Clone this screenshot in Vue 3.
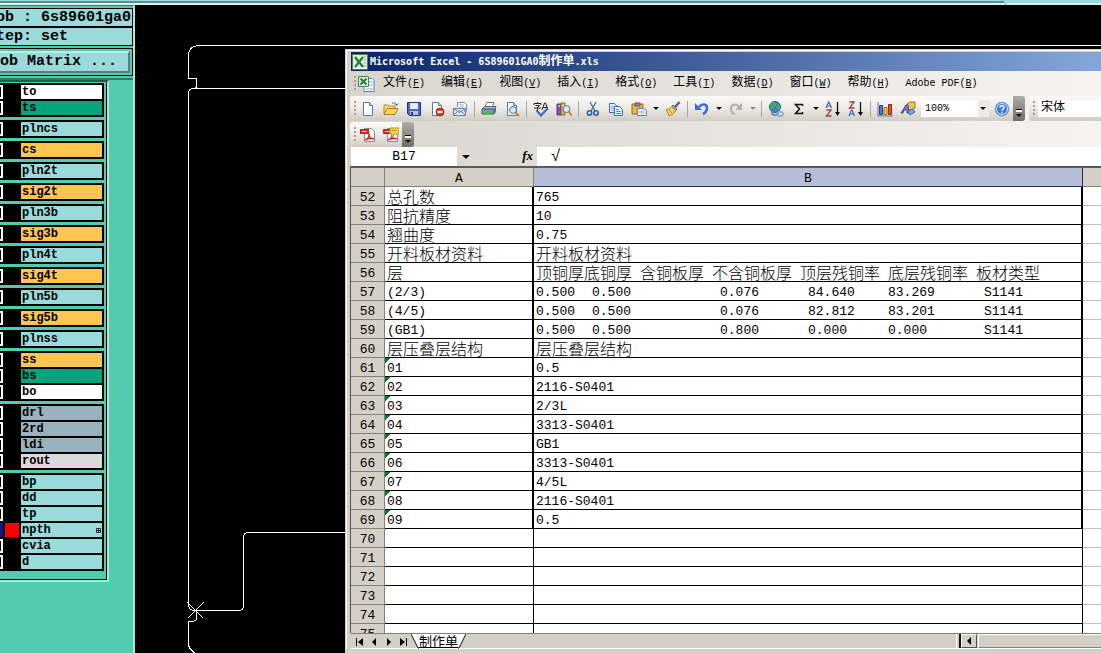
<script setup>
const layerGroups = [
  [{ name: 'to', tone: 'white' }, { name: 'ts', tone: 'green' }],
  [{ name: 'plncs', tone: 'cyan' }],
  [{ name: 'cs', tone: 'amber' }],
  [{ name: 'pln2t', tone: 'cyan' }],
  [{ name: 'sig2t', tone: 'amber' }],
  [{ name: 'pln3b', tone: 'cyan' }],
  [{ name: 'sig3b', tone: 'amber' }],
  [{ name: 'pln4t', tone: 'cyan' }],
  [{ name: 'sig4t', tone: 'amber' }],
  [{ name: 'pln5b', tone: 'cyan' }],
  [{ name: 'sig5b', tone: 'amber' }],
  [{ name: 'plnss', tone: 'cyan' }],
  [{ name: 'ss', tone: 'amber' }, { name: 'bs', tone: 'green' }, { name: 'bo', tone: 'white' }],
  [{ name: 'drl', tone: 'slate' }, { name: '2rd', tone: 'slate' }, { name: 'ldi', tone: 'slate' }, { name: 'rout', tone: 'silver' }],
  [{ name: 'bp', tone: 'cyan' }, { name: 'dd', tone: 'cyan' }, { name: 'tp', tone: 'cyan' }, { name: 'npth', tone: 'cyan', active: true }, { name: 'cvia', tone: 'cyan' }, { name: 'd', tone: 'cyan' }],
]

const menus = [
  ['文件', 'F'], ['编辑', 'E'], ['视图', 'V'], ['插入', 'I'], ['格式', 'O'],
  ['工具', 'T'], ['数据', 'D'], ['窗口', 'W'], ['帮助', 'H'], ['Adobe PDF', 'B'],
]

const page = '<path d="M3.500 1.500h6l3 3v10h-9z" fill="#fff" stroke="#5a78b4"/><path d="M9.500 1.500v3h3" fill="#c9d8f2" stroke="#5a78b4"/>'
const pdf = '<path d="M4.500 1.500h7l3 3v10h-10z" fill="#fff" stroke="#8a8a8a"/><path d="M0 2h9v5H0z" fill="#d81e1e"/><path d="M2 4.500h5" stroke="#fff"/><path d="M5 13c3-1 4-4 4-6 0 3 2 5 5 5-3-1-6-.5-9 1z" fill="none" stroke="#d81e1e" stroke-width="1.300"/>'
const icons = {
  new: page,
  open: '<path d="M1 13V4h4l1 1h6v3" fill="#f7d777" stroke="#b8892a"/><path d="M1 13.500l3-6h11l-3 6z" fill="#fbd45e" stroke="#b07c1c"/><path d="M9 2.500c2-1.500 4-.5 4.500 1.500M15 2.500l-1.300 2-2-1.200" fill="none" stroke="#4a6fae"/>',
  save: '<path d="M1.500 1.500h13v13h-11l-2-2z" fill="#4d66cf" stroke="#26358c"/><path d="M4 2h8v6H4z" fill="#e6ecfa"/><path d="M4 10h8v4H4z" fill="#b8c4e6"/><path d="M5 11h2v3H5z" fill="#26358c"/>',
  permission: page + '<circle cx="11" cy="11" r="4" fill="#d9401f" stroke="#a62a10"/><path d="M8.500 11h5" stroke="#fff" stroke-width="2"/>',
  mail: '<path d="M5.500 6V1.500h7l2 2V10" fill="#fff" stroke="#6c86b8"/><path d="M7 4h5M7 6h5" stroke="#9cb0d6"/><path d="M1.500 7.500h12v7h-12z" fill="#e4e8f2" stroke="#6f7f9c"/><path d="M1.500 14l5-4h2l5 4M1.500 7.500l6 4 6-4" fill="none" stroke="#6f7f9c"/><path d="M12 8h3v3h-3z" fill="#7a9ad8"/>',
  print: '<path d="M4 6l2-4.500h7L11.500 6" fill="#fff" stroke="#5b7396"/><path d="M1 8l3-2.500h11L13 8z" fill="#bcc8d8" stroke="#4c5f7c"/><path d="M1 8h12v5H1z" fill="#8495ae" stroke="#4c5f7c"/><path d="M13 8l2-2.500V11l-2 2z" fill="#5e708c"/><path d="M3 11h8v3H3z" fill="#54b454"/>',
  preview: page + '<circle cx="9" cy="9" r="3.500" fill="#cfe4f8" fill-opacity=".9" stroke="#5d6c82"/><path d="M11.500 11.500l3.500 3.500" stroke="#b8862c" stroke-width="2"/>',
  spell: '<path d="M1 2.500h7M4.500 1v1.500M1 2.500V4M8 2.500V4M2.500 4.500h4L4.500 6.500V10H3M1 7h7" fill="none" stroke="#222"/><path d="M9 9l2.500-7h1L15 9M10 6.500h4" fill="none" stroke="#222"/><path d="M4 10l4 4.500L14 8" fill="none" stroke="#3a6fd0" stroke-width="2.200"/>',
  research: '<path d="M1 3h4v11H1z" fill="#7a5bb0" stroke="#4b3880"/><path d="M5 2h4v12H5z" fill="#d4b05a" stroke="#8a6a20"/><path d="M2 5h2M6 5h2" stroke="#fff"/><circle cx="10.500" cy="8" r="3.500" fill="#d7e8f8" stroke="#5d6c82"/><path d="M13 10.500l2.500 4" stroke="#b8862c" stroke-width="2"/>',
  cut: '<path d="M5 1l5 9M11 1L6 10" stroke="#5d7596" stroke-width="1.500"/><circle cx="4.500" cy="12" r="2.200" fill="none" stroke="#2f5dbb" stroke-width="1.600"/><circle cx="11" cy="12" r="2.200" fill="none" stroke="#2f5dbb" stroke-width="1.600"/>',
  copy: '<path d="M1.500 2.500h5l3 3v6h-8z" fill="#eaf2ff" stroke="#3f6bbd"/><path d="M3 5h3M3 7h4M3 9h4" stroke="#7ba0e0"/><path d="M6.500 5.500h5l3 3v6h-8z" fill="#eaf2ff" stroke="#3f6bbd"/><path d="M8 8.500h3M8 10.500h5M8 12.500h5" stroke="#5b88d8"/>',
  paste: '<path d="M1 3h11v10H1z" fill="#e9b53c" stroke="#9a6d17"/><path d="M4 2h5v3H4z" fill="#8c8f96" stroke="#585b62"/><path d="M6.500 7.500h6l3 2v5h-9z" fill="#fff" stroke="#6078a8"/><path d="M8 10h5M8 12h6" stroke="#8aa2cc"/>',
  brush: '<path d="M14.500 1L10 6" stroke="#5f549e" stroke-width="2.500"/><path d="M8 4l4 4-1.500 1.500-4-4z" fill="#9ba3b2" stroke="#646b7a"/><path d="M6.500 5.500l4 4C9 13 6 14.500 4 14.500 3 12 2 10.500 1 8.500c2 0 4-1 5.500-3z" fill="#f3d25b" stroke="#a8852a"/><path d="M4 9l3 3" stroke="#a8852a"/>',
  undo: '<path d="M5 6c3-4 8-3 8 1 0 3-2 5-4 6" fill="none" stroke="#3d6fcd" stroke-width="2.600"/><path d="M1 2v7h7z" fill="#3d6fcd"/>',
  redo: '<path d="M11 6C8 2 3 3 3 8c0 3 2 4.500 4 5" fill="none" stroke="#b0b0b0" stroke-width="2.200"/><path d="M14 2v7H7z" fill="#b0b0b0"/>',
  link: '<circle cx="7" cy="6" r="5.500" fill="#3d7dc8" stroke="#2a5a94"/><path d="M4 2c3-1 5 0 4 2S5 6 4 9C2 8 1.500 4 4 2zM9 4l3 0v4L9 9z" fill="#4cb050"/><rect x="4" y="10" width="6" height="4" rx="2" fill="none" stroke="#607aa8" stroke-width="1.500"/><rect x="9" y="11" width="6" height="4" rx="2" fill="none" stroke="#8ba2c8" stroke-width="1.500"/>',
  sum: '<path d="M11.500 5V3.500H4.500l4 4.500-4 4.500h7V11" fill="none" stroke="#111" stroke-width="1.500"/>',
  az: '<path d="M1 7l2.500-6h.5L6.500 7M2 5h4" fill="none" stroke="#3d61b8" stroke-width="1.200"/><path d="M1.500 9h4.500l-4.500 6h5" fill="none" stroke="#b03b32" stroke-width="1.300"/><path d="M12.500 1v12" stroke="#111" stroke-width="1.300"/><path d="M10 11h5l-2.500 4z" fill="#111"/>',
  za: '<path d="M1.500 1h4.500L1.500 7h5" fill="none" stroke="#b03b32" stroke-width="1.300"/><path d="M1 15l2.500-6h.5l2.500 6M2 13h4" fill="none" stroke="#3d61b8" stroke-width="1.200"/><path d="M12.500 1v12" stroke="#111" stroke-width="1.300"/><path d="M10 11h5l-2.500 4z" fill="#111"/>',
  chart: '<path d="M1 1v14h15" fill="none" stroke="#66758f"/><path d="M2.500 4.500h3v9h-3z" fill="#4f7ad4" stroke="#26448e"/><path d="M7 6.500h3v7H7z" fill="#f2c84b" stroke="#9a7820"/><path d="M11.500 3.500h3v10h-3z" fill="#dc5531" stroke="#8d2b14"/>',
  draw: '<path d="M7 3l3-2h5v6l-3 2H7z" fill="#e8c65c" stroke="#967626"/><path d="M1 12L6 4h2l1 8H7V9H4l-1 3z" fill="#7b79cf" stroke="#48478e"/><path d="M8 10l5-2 2 3-5 3z" fill="#7aa4dd" stroke="#4b6ea0"/>',
  help: '<circle cx="8" cy="8" r="6.800" fill="#3c78d8" stroke="#6c95d2"/><circle cx="8" cy="8" r="5.500" fill="none" stroke="#d8e8ff"/><path d="M6 6.500C6 4 10 4 10 6.500 10 8 8 8 8 9.500M8 10.800v1.400" fill="none" stroke="#fff" stroke-width="1.500"/>',
  pdf,
  pdfNote: pdf + '<path d="M7 1h9v6h-4l-3 3V7H7z" fill="#f8d548" stroke="#b8952a"/><path d="M9 3.500h5" stroke="#b8952a"/>',
}

const standardBar = [
  { icon: 'new', label: '新建' }, { icon: 'open', label: '打开' }, { icon: 'save', label: '保存' },
  { icon: 'permission', label: '权限' }, { icon: 'mail', label: '电子邮件' }, { sep: true },
  { icon: 'print', label: '打印' }, { icon: 'preview', label: '打印预览' }, { sep: true },
  { icon: 'spell', label: '拼写检查' }, { icon: 'research', label: '信息检索' }, { sep: true },
  { icon: 'cut', label: '剪切' }, { icon: 'copy', label: '复制' }, { icon: 'paste', label: '粘贴', more: true },
  { icon: 'brush', label: '格式刷' }, { sep: true },
  { icon: 'undo', label: '撤消', more: true }, { icon: 'redo', label: '恢复', more: true, dim: true }, { sep: true },
  { icon: 'link', label: '超链接' }, { icon: 'sum', label: '自动求和', more: true },
  { icon: 'az', label: '升序排序' }, { icon: 'za', label: '降序排序' }, { sep: true },
  { icon: 'chart', label: '图表向导' }, { icon: 'draw', label: '绘图' },
]

const rows = [
  { n: 52, a: '总孔数', b: '765' },
  { n: 53, a: '阻抗精度', b: '10' },
  { n: 54, a: '翘曲度', b: '0.75' },
  { n: 55, a: '开料板材资料', b: '开料板材资料' },
  { n: 56, a: '层', heads: ['顶铜厚', '底铜厚', '含铜板厚', '不含铜板厚', '顶层残铜率', '底层残铜率', '板材类型'] },
  { n: 57, a: '(2/3)', values: ['0.500', '0.500', '0.076', '84.640', '83.269', 'S1141'] },
  { n: 58, a: '(4/5)', values: ['0.500', '0.500', '0.076', '82.812', '83.201', 'S1141'] },
  { n: 59, a: '(GB1)', values: ['0.500', '0.500', '0.800', '0.000', '0.000', 'S1141'] },
  { n: 60, a: '层压叠层结构', b: '层压叠层结构' },
  { n: 61, a: '01', b: '0.5', flag: true },
  { n: 62, a: '02', b: '2116-S0401', flag: true },
  { n: 63, a: '03', b: '2/3L', flag: true },
  { n: 64, a: '04', b: '3313-S0401', flag: true },
  { n: 65, a: '05', b: 'GB1', flag: true },
  { n: 66, a: '06', b: '3313-S0401', flag: true },
  { n: 67, a: '07', b: '4/5L', flag: true },
  { n: 68, a: '08', b: '2116-S0401', flag: true },
  { n: 69, a: '09', b: '0.5', flag: true },
  { n: 70 }, { n: 71 }, { n: 72 }, { n: 73 }, { n: 74 }, { n: 75 },
]
const isHan = (t) => /[\u4e00-\u9fff]/.test(t || '')
const tabArrows = [
  ['首张工作表', 'M1 0h1v8H1zM8 0v8L3 4z'],
  ['上一张工作表', 'M6 0v8L2 4z'],
  ['下一张工作表', 'M2 0v8l4-4z'],
  ['末张工作表', 'M0 0v8l5-4zM6 0h1v8H6z'],
]
</script>

<template>
  <div class="desktop">
    <div class="top-strip"><span class="strip-left"></span><span class="strip-right"></span></div>
    <div class="work">
      <aside class="sidebar">
        <section class="job">
          <div class="job-row">Job : 6s89601ga0</div>
          <div class="job-row">Step: set</div>
          <div class="matrix-frame"><button class="matrix" type="button">Job Matrix ...</button></div>
        </section>
        <section class="layers">
          <div v-for="(group, gi) in layerGroups" :key="gi" class="group">
            <div v-for="layer in group" :key="layer.name" class="layer" :class="{ active: layer.active }">
              <input class="tick" type="checkbox" :aria-label="layer.name" :checked="layer.active" />
              <span class="swatch"></span>
              <button type="button" class="name" :class="layer.tone">
                {{ layer.name }}
                <svg v-if="layer.active" width="5" height="5" viewBox="0 0 5 5"><path d="M.5.5h4v4h-4zM2.500 0v5M0 2.500h5" fill="none" stroke="#111" stroke-width=".8" /></svg>
              </button>
            </div>
          </div>
        </section>
      </aside>

      <main class="canvas">
        <svg class="board" width="1400" height="900" viewBox="135 5 1400 900" fill="none" stroke="#fff" shape-rendering="crispEdges">
          <path d="M1535 45.500H200q-6 0-9 3t-2.500 9V78.500H196.500V86q0 2-2 2M346 88.500H194q-5.500 0-5.500 5V604q0 6.500 6 6.500H239q4.500 0 4.500-5V538q0-5.500 5-5.500H346" />
          <path d="M196.500 611v7q0 3-3 3h-5V644q0 4 4 7l4 4M187.500 602.500l16 16M203.500 602.500l-16 16" />
        </svg>

        <div class="excel">
          <header class="title">
            <svg width="16" height="16" viewBox="0 0 16 16"><path d="M.5.5h15v15H.5z" fill="#eaf4e4" stroke="#3c8a44" /><path d="M3 3l8 10M11 3L3 13" stroke="#23823a" stroke-width="2.500" /><path d="M12 3h2M12 6h2M12 9h2M12 12h2" stroke="#6db078" /></svg>
            <h1>Microsoft Excel - 6S89601GA0<span class="han">制作单</span>.xls</h1>
          </header>

          <nav class="menu">
            <i class="grip"></i>
            <svg class="book" width="18" height="17" viewBox="0 0 18 17"><path d="M7 3.500h8l2 2v11H7z" fill="#fff" stroke="#5b82bd" /><path d="M12 7h4M12 10h4M9 14h7" stroke="#86a6d6" /><path d="M1.500 1.500h10v10h-10z" fill="#e2f1dc" stroke="#3c8a44" /><path d="M3.500 3.500l6 6M9.500 3.500l-6 6" stroke="#23823a" stroke-width="2" /></svg>
            <button v-for="m in menus" :key="m[0]" type="button">{{ m[0] }}<span class="key">(<u>{{ m[1] }}</u>)</span></button>
          </nav>

          <div class="bars">
            <div class="bar standard">
              <i class="grip"></i>
              <template v-for="(t, i) in standardBar" :key="i">
                <i v-if="t.sep" class="sep"></i>
                <template v-else>
                  <button type="button" class="tool" :aria-label="t.label"><svg width="16" height="16" viewBox="0 0 16 16" v-html="icons[t.icon]"></svg></button>
                  <button v-if="t.more" type="button" class="more" :class="{ dim: t.dim }" :aria-label="t.label + '选项'"><i class="caret"></i></button>
                </template>
              </template>
              <label class="zoom"><select aria-label="显示比例"><option>100%</option></select><i class="caret"></i></label>
              <button type="button" class="tool" aria-label="帮助"><svg width="16" height="16" viewBox="0 0 16 16" v-html="icons.help"></svg></button>
              <button type="button" class="cap" aria-label="工具栏选项"><i class="caret"></i></button>
            </div>
            <div class="bar format">
              <i class="grip"></i>
              <select class="font" aria-label="字体"><option>宋体</option></select>
            </div>
          </div>

          <div class="bars">
            <div class="bar">
              <i class="grip"></i>
              <button type="button" class="tool" aria-label="转换为 PDF"><svg width="16" height="16" viewBox="0 0 16 16" v-html="icons.pdf"></svg></button>
              <button type="button" class="tool" aria-label="转换并审阅"><svg width="16" height="16" viewBox="0 0 16 16" v-html="icons.pdfNote"></svg></button>
              <button type="button" class="cap" aria-label="工具栏选项"><i class="caret"></i></button>
            </div>
          </div>

          <div class="formula">
            <input class="cell-name" aria-label="名称框" value="B17" />
            <button type="button" class="name-more" aria-label="名称列表"><i class="caret"></i></button>
            <span class="fx">fx</span>
            <input class="expr" aria-label="编辑栏" value="√" />
          </div>

          <div class="sheet">
            <table>
              <colgroup><col class="c-num" /><col class="c-a" /><col /><col class="c-end" /></colgroup>
              <thead>
                <tr><th></th><th>A</th><th class="selected">B</th><th></th></tr>
              </thead>
              <tbody>
                <tr v-for="r in rows" :key="r.n" :class="{ filled: r.a }">
                  <th scope="row">{{ r.n }}</th>
                  <td :class="{ han: isHan(r.a), flag: r.flag }">{{ r.a }}</td>
                  <td v-if="r.heads" class="han"><div class="heads"><span v-for="h in r.heads" :key="h">{{ h }}</span></div></td>
                  <td v-else-if="r.values"><div class="values"><span v-for="(v, i) in r.values" :key="i">{{ v }}</span></div></td>
                  <td v-else :class="{ han: isHan(r.b) }">{{ r.b }}</td>
                  <td></td>
                </tr>
              </tbody>
            </table>
          </div>

          <footer class="tabs">
            <button v-for="a in tabArrows" :key="a[0]" type="button" class="step" :aria-label="a[0]"><svg width="8" height="8" viewBox="0 0 8 8"><path :d="a[1]" /></svg></button>
            <svg class="slant" width="8" height="15" viewBox="0 0 8 15"><path d="M0 0h8v14H7z" fill="#fff" /><path d="M0 0l7 14h1" fill="none" stroke="#111" /></svg>
            <button type="button" class="tab">制作单</button>
            <svg class="slant" width="8" height="15" viewBox="0 0 8 15"><path d="M0 0h8L1 14H0z" fill="#fff" /><path d="M8 0L1 14H0" fill="none" stroke="#111" /></svg>
            <i class="split"></i>
            <button type="button" class="scroll-left" aria-label="向左滚动"><svg width="8" height="8" viewBox="0 0 8 8"><path d="M6 0v8L2 4z" /></svg></button>
            <div class="thumb"></div>
          </footer>
        </div>
      </main>
    </div>
  </div>
</template>

<style>
body { background: #000; }
</style>

<style scoped>
* { box-sizing: border-box; }
button, input, select { margin: 0; padding: 0; border: 0; border-radius: 0; background: none; color: inherit; font: inherit; appearance: none; outline: 0; }
i { display: block; flex: none; }
svg { display: block; flex: none; }

.desktop { display: flex; flex-direction: column; height: 100vh; overflow: hidden; background: #000; color: #000; }
.top-strip { display: flex; flex: none; height: 5px; background: #9bdada; }
.strip-left { flex: 1; border-top: 1px solid #9bdada; border-bottom: 2px solid #d9f1ef; background: #5c8f90; }
.strip-right { width: 94px; margin-left: 3px; border-bottom: 2px solid #d9f1ef; }
.work { display: flex; flex: 1; min-height: 0; }

.sidebar { flex: none; width: 135px; overflow: hidden; background: #52ccae; border-right: 2px solid #a9e8da; border-top: 1px solid #2f7766; font-family: "Liberation Mono", monospace; font-weight: bold; }
.job { margin: 0 0 0 -16px; padding-top: 2px; border-bottom: 2px solid #2f7766; font-size: 15px; line-height: 17px; }
.job-row { height: 19px; padding-left: 2px; border: 1px solid #000; background: #9bdada; white-space: pre; overflow: hidden; }
.matrix-frame { margin: 2px 0; padding: 2px; border: 1px solid #000; }
.matrix { display: block; width: 100%; height: 22px; padding-left: 2px; border: 2px solid; border-color: #b9f4ea #557f82 #557f82 #b9f4ea; background: #9bdada; text-align: left; line-height: 18px; white-space: pre; }

.layers { width: 109px; padding: 1px 3px 9px 0; border: solid; border-width: 2px 2px 2px 0; border-color: #1d5b4c #a9e8da #a9e8da; box-shadow: inset -1px 0 #000, inset 0 -1px #000; display: flex; flex-direction: column; gap: 3px; }
.group { display: flex; flex-direction: column; gap: 2px; padding: 2px 2px 2px 0; background: #000; }
.layer { display: flex; height: 14px; }
.tick { flex: none; width: 3px; border: 2px solid #fff; border-left: 0; background: #000; }
.swatch { flex: none; width: 14px; margin: 0 2px; background: #000; }
.active .tick { border-color: #12128c; background: #12128c; }
.active .swatch { background: #f00; }
.name { display: flex; flex: 1; align-items: center; justify-content: space-between; padding: 0 1px; font-size: 12px; line-height: 14px; }
.white { background: #fff; }
.green { background: #04a57c; }
.cyan { background: #9bdada; }
.amber { background: #ffc54f; }
.slate { background: #99b2bd; }
.silver { background: #dadada; }

.canvas { position: relative; flex: 1; min-width: 0; overflow: hidden; background: #000; }
.board { position: absolute; left: 0; top: 0; }

.excel { position: absolute; left: 210px; top: 44px; right: 0; bottom: 0; display: flex; flex-direction: column; padding: 2px 0 0 4px; border: solid #d4d0c8; border-width: 1px 0 4px 1px; box-shadow: inset 1px 1px #fff; background: #d4d0c8; font-family: "Liberation Mono", "Noto Sans CJK SC", monospace; }
.title { display: flex; flex: none; align-items: center; gap: 2px; height: 19px; margin-left: 1px; padding-left: 1px; background: linear-gradient(90deg, #0a246a, #84a6d8); color: #fff; }
.title h1 { margin: 0; font-size: 10px; line-height: 18px; white-space: pre; font-family: "DejaVu Sans Mono", "Noto Sans CJK SC", monospace; }
.title .han { font-size: 12px; }

.menu { display: flex; flex: none; align-items: center; height: 25px; padding-left: 4px; background: linear-gradient(90deg, #d8d5cd, #f5f4f2); font-family: "Liberation Mono", "Noto Sans CJK SC", monospace; font-size: 12px; }
.book { margin-left: 1px; }
.menu button { flex: none; padding: 0 8px; line-height: 24px; white-space: nowrap; }
.menu .key, .menu button:last-child { font-size: 10px; }
.grip { width: 2px; height: 16px; background: repeating-linear-gradient(#a5a29b 0 2px, transparent 2px 4px); }

.bars { display: flex; flex: none; height: 25px; gap: 4px; background: linear-gradient(90deg, #d8d5cd, #f5f4f2); }
.bars + .bars { height: 26px; padding-top: 1px; }
.bar { display: flex; flex: none; align-items: center; height: 25px; padding-left: 4px; border-radius: 3px; background: linear-gradient(#fbfaf9, #eceae5 50%, #d0ccc3); }
.format { flex: 1; min-width: 0; padding-left: 4px; border-radius: 3px 0 0 3px; }
.tool { display: flex; flex: none; align-items: center; justify-content: center; width: 23px; height: 23px; }
.more { display: flex; flex: none; align-items: center; justify-content: center; width: 11px; height: 23px; }
.sep { width: 1px; height: 16px; margin: 0 2px 0 3px; background: #a9a69e; }
.caret { width: 0; height: 0; border: solid transparent; border-width: 3px 3px 0; border-top-color: #111; }
.dim .caret { border-top-color: #8e8e8e; }
.zoom { display: flex; align-items: center; width: 68px; height: 17px; margin: 0 1px; padding-right: 3px; background: linear-gradient(90deg, #fff 57px, #eceae5 57px); margin-left: 2px; }
.zoom select { flex: 1; padding-left: 4px; font-size: 10px; line-height: 15px; }
.cap { display: flex; flex: none; flex-direction: column; align-items: center; justify-content: flex-end; gap: 2px; width: 12px; height: 25px; padding-bottom: 4px; border-radius: 0 3px 3px 0; background: linear-gradient(#aeaba5, #6f6d69); }
.cap::before { content: ""; width: 6px; height: 2px; border-top: 1px solid #111; background: #fff; }
.font { flex: 1; min-width: 0; height: 17px; margin-left: 3px; padding-left: 3px; background: #fff; font-size: 12px; line-height: 17px; }

.formula { display: flex; flex: none; height: 19px; padding-left: 1px; background: linear-gradient(90deg, #d8d5cd, #f5f4f2); font-size: 13px; }
.cell-name { width: 106px; background: #fff; text-align: center; }
.name-more { display: flex; align-items: center; justify-content: center; width: 18px; }
.name-more .caret { border-width: 4px 4px 0; }
.fx { width: 62px; padding-right: 4px; text-align: right; font: italic bold 13px/18px "Liberation Serif", serif; }
.expr { flex: 1; min-width: 0; padding-left: 14px; background: #fff; font-size: 16px; }

.sheet { flex: 1; min-height: 0; overflow: hidden; border-left: 1px solid #555; border-top: 2px solid #5a5a5a; background: #fff; }
table { width: 100%; table-layout: fixed; border-collapse: separate; border-spacing: 0; }
.c-num { width: 34px; }
.c-a { width: 149px; }
.c-end { width: 18px; }
th, td { height: 19px; padding: 3px 0 0; overflow: hidden; line-height: 15px; white-space: pre; font-size: 13px; font-weight: normal; vertical-align: top; }
th { background: #d4d0c8; border-right: 1px solid #808080; border-bottom: 1px solid #808080; }
thead th:last-child { border-right: 0; }
thead .selected { background: #b6bdd6; border-color: #22305a; }
td { padding-left: 2px; border-right: 1px solid #000; border-bottom: 1px solid #000; text-align: left; }
td:last-child { border-right: 0; border-bottom-color: #c0c0c0; }
.filled td:not(:last-child) { border-right-width: 2px; }
td.han { padding-top: 0; font-family: "Noto Sans CJK SC", sans-serif; font-size: 16px; line-height: 18px; font-weight: 300; }
td.flag { background: linear-gradient(135deg, #0a7a2a 4px, transparent 4px); }
.heads { display: flex; gap: 8px; }
.heads span:first-child { margin-right: -8px; }
.values { display: grid; grid-template-columns: 56px 128px 88px 80px 96px auto; }

.tabs { display: flex; flex: none; height: 16px; margin-left: 1px; border-top: 1px solid #808080; border-bottom: 1px solid #fff; }
.step { display: flex; align-items: center; justify-content: center; width: 15px; height: 15px; }
.slant { align-self: flex-start; }
.tab { height: 14px; border-bottom: 1px solid #111; background: #fff; font-family: "Noto Sans CJK SC", sans-serif; font-size: 13px; line-height: 12px; text-decoration: underline; }
.split { width: 5px; margin-left: auto; border-left: 1px solid #fff; border-right: 2px solid #111; }
.scroll-left { display: flex; align-items: center; justify-content: center; width: 16px; border: 1px solid; border-color: #fff #555 #555 #fff; }
.thumb { width: 123px; margin-left: 1px; border: 1px solid; border-color: #fff #808080 #808080 #fff; border-right: 0; }
</style>
